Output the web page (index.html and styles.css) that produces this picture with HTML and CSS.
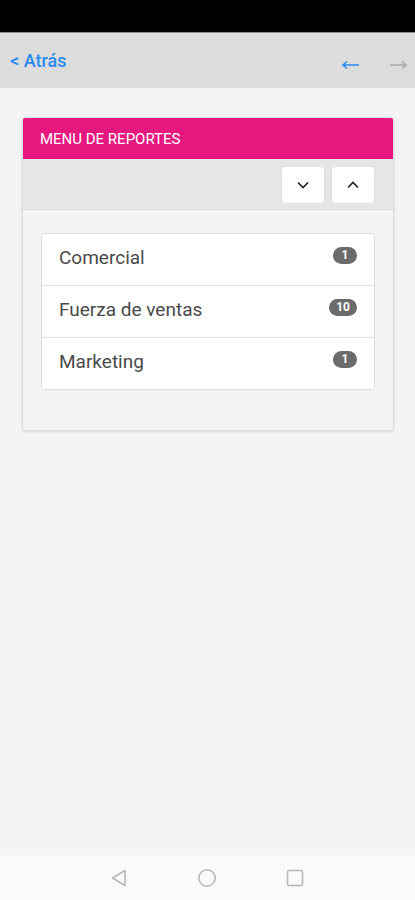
FILE: index.html
```html
<!DOCTYPE html>
<html lang="es">
<head>
    <meta charset="UTF-8">
    <meta name="viewport" content="width=device-width, initial-scale=1.0">
    <title>Menu de reportes</title>
    <link rel="stylesheet" href="styles.css">
</head>
<body>
    <div class="status-bar"></div>
    <div class="nav-bar">
        <a class="back-link" href="#">&lt; Atrás</a>
        <div class="nav-arrows">
            <svg class="arrow" width="18" height="10" viewBox="0 0 18 10"><path d="M1 5 H17 M5 1.5 L1 5 L5 8.5" fill="none" stroke="#2a8bf2" stroke-width="1.6"/></svg>
            <svg class="arrow" width="18" height="10" viewBox="0 0 18 10"><path d="M1 5 H17 M13 1.5 L17 5 L13 8.5" fill="none" stroke="#a9a9a9" stroke-width="1.6"/></svg>
        </div>
    </div>

    <div class="content">
        <div class="panel">
            <div class="panel-header">MENU DE REPORTES</div>
            <div class="panel-tools">
                <button class="tool-btn" title="Expandir">
                    <svg width="14" height="14" viewBox="0 0 14 14"><path d="M2 4.5 L7 9.5 L12 4.5" fill="none" stroke="#222" stroke-width="1.6"/></svg>
                </button>
                <button class="tool-btn" title="Contraer">
                    <svg width="14" height="14" viewBox="0 0 14 14"><path d="M2 9.5 L7 4.5 L12 9.5" fill="none" stroke="#222" stroke-width="1.6"/></svg>
                </button>
            </div>
            <div class="panel-body">
                <ul class="report-list">
                    <li class="report-item"><span>Comercial</span><span class="badge">1</span></li>
                    <li class="report-item"><span>Fuerza de ventas</span><span class="badge">10</span></li>
                    <li class="report-item"><span>Marketing</span><span class="badge">1</span></li>
                </ul>
            </div>
        </div>
    </div>

    <div class="system-bar">
        <svg width="20" height="20" viewBox="0 0 20 20"><path d="M16 2.5 L3.5 10 L16 17.5 Z" fill="none" stroke="#b8b8b8" stroke-width="1.6" stroke-linejoin="round"/></svg>
        <svg width="20" height="20" viewBox="0 0 20 20"><circle cx="10" cy="10" r="8.2" fill="none" stroke="#b8b8b8" stroke-width="1.6"/></svg>
        <svg width="20" height="20" viewBox="0 0 20 20"><rect x="2.5" y="2.5" width="15" height="15" rx="1.5" fill="none" stroke="#b8b8b8" stroke-width="1.6"/></svg>
    </div>
</body>
</html>
```

FILE: styles.css
```css
body {
    margin: 0;
    height: 900px;
    display: flex;
    flex-direction: column;
    background: #f4f4f4;
    font-family: 'Roboto', 'Liberation Sans', sans-serif;
}
.status-bar {
    height: 32px;
    background: #000;
    border-bottom: 1px solid #8a8a8a;
}
.nav-bar {
    height: 55px;
    background: #dcdcdc;
    display: flex;
    align-items: center;
    justify-content: space-between;
    padding: 0 8px 0 10px;
}
.back-link {
    color: #2a8bf2;
    text-decoration: none;
    font-size: 18px;
    font-weight: 500;
    margin-top: -1px;
}
.nav-arrows {
    display: flex;
    gap: 29px;
    margin-top: 8px;
}
.content {
    flex: 1;
    padding: 29px 21px 0 22px;
}
.panel {
    background: #f4f4f4;
    border: 1px solid #dedede;
    border-radius: 3px;
    box-shadow: 0 1px 3px rgba(0, 0, 0, 0.12);
    overflow: hidden;
}
.panel-header {
    background: #e6177f;
    color: #fff;
    font-size: 15px;
    height: 41px;
    line-height: 43px;
    padding-left: 17px;
}
.panel-tools {
    background: #e6e6e6;
    height: 51px;
    display: flex;
    justify-content: flex-end;
    align-items: flex-start;
    gap: 6px;
    padding: 7px 18px 0 0;
    box-sizing: border-box;
    border-bottom: 1px solid #dcdcdc;
}
.tool-btn {
    width: 44px;
    height: 38px;
    background: #fff;
    border: 1px solid #e0e0e0;
    border-radius: 4px;
    display: flex;
    align-items: center;
    justify-content: center;
    padding: 0;
    cursor: pointer;
}
.panel-body {
    padding: 23px 18px 40px 18px;
}
.report-list {
    list-style: none;
    margin: 0;
    padding: 0;
    background: #fff;
    border: 1px solid #dedede;
    border-radius: 3px;
}
.report-item {
    height: 51px;
    display: flex;
    align-items: center;
    justify-content: space-between;
    padding: 0 17px 4px 17px;
    box-sizing: border-box;
    font-size: 19px;
    color: #4a4a4a;
}
.report-item + .report-item {
    border-top: 1px solid #e2e2e2;
    height: 52px;
}
.badge {
    background: #6b6b6b;
    color: #fff;
    font-size: 12px;
    font-weight: 700;
    min-width: 10px;
    height: 17px;
    line-height: 17px;
    padding: 0 7px;
    border-radius: 9px;
    text-align: center;
    margin-top: -4px;
}
.system-bar {
    height: 45px;
    background: #fafafa;
    display: flex;
    align-items: center;
    justify-content: center;
    gap: 68px;
    padding-right: 2px;
}
```
